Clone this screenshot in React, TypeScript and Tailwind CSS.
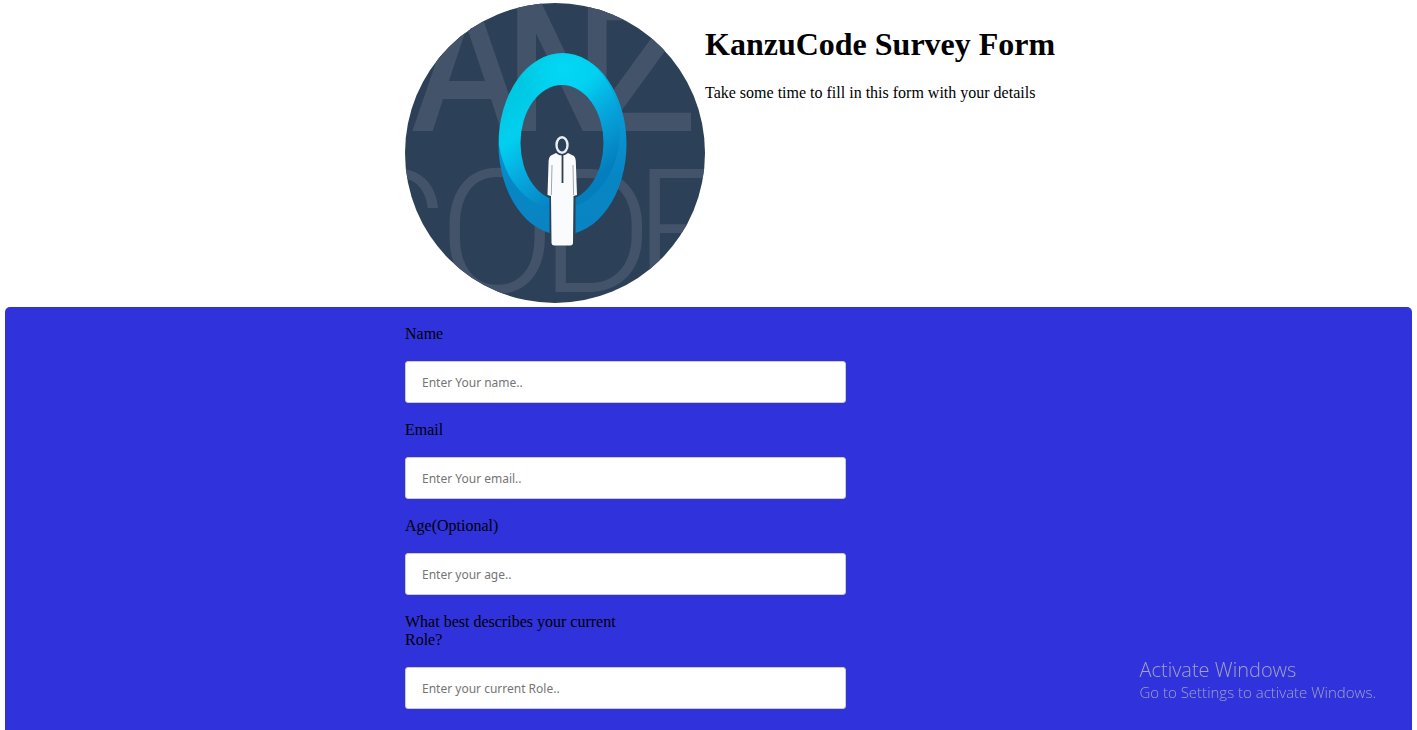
import React from "react";

type Field = {
  id: string;
  label: string;
  placeholder: string;
  type: string;
};

const fields: Field[] = [
  { id: "name", label: "Name", placeholder: "Enter Your name..", type: "text" },
  { id: "email", label: "Email", placeholder: "Enter Your email..", type: "email" },
  { id: "age", label: "Age(Optional)", placeholder: "Enter your age..", type: "text" },
  {
    id: "role",
    label: "What best describes your current Role?",
    placeholder: "Enter your current Role..",
    type: "text",
  },
];

function Logo() {
  return (
    <svg
      viewBox="0 0 300 300"
      role="img"
      aria-label="KanzuCode logo"
      className="size-[300px] shrink-0 rounded-full bg-[#2c4057]"
    >
      <defs>
        <linearGradient id="rim" gradientUnits="userSpaceOnUse" x1="150" y1="50" x2="170" y2="232">
          <stop offset="0" stopColor="#00c4e4" />
          <stop offset="0.35" stopColor="#0a9bd6" />
          <stop offset="0.7" stopColor="#0786c4" />
          <stop offset="1" stopColor="#0a84c2" />
        </linearGradient>
        <linearGradient id="face" gradientUnits="userSpaceOnUse" x1="120" y1="80" x2="194" y2="172">
          <stop offset="0" stopColor="#00c8e2" />
          <stop offset="0.3" stopColor="#02cff0" />
          <stop offset="0.62" stopColor="#06a6dc" />
          <stop offset="1" stopColor="#047fbe" />
        </linearGradient>
        <radialGradient id="glow" gradientUnits="userSpaceOnUse" cx="158" cy="66" r="44">
          <stop offset="0" stopColor="#02d8f6" />
          <stop offset="1" stopColor="#02d8f6" stopOpacity="0" />
        </radialGradient>
        <mask id="ring">
          <ellipse cx="157.5" cy="141" rx="64" ry="91" fill="#fff" />
          <ellipse cx="157" cy="140" rx="41.5" ry="58" fill="#000" />
          <rect x="144.500" y="185" width="26" height="60" fill="#000" />
        </mask>
      </defs>

      <g fill="#43536a">
        <g
          fontSize="172"
          stroke="#43536a"
          strokeWidth="4"
          className="font-['DejaVu_Sans_Condensed',sans-serif]"
        >
          <text x="9" y="126">A</text>
          <text x="99" y="126">N</text>
          <text x="185" y="126">Z</text>
        </g>
        <g fontSize="172" fontWeight="300" className="font-['Roboto',sans-serif]">
          <text x="-69" y="289">C</text>
          <text x="34" y="289">O</text>
          <text x="135" y="289">D</text>
          <text x="229" y="289">E</text>
        </g>
      </g>

      <g mask="url(#ring)">
        <rect x="90" y="45" width="135" height="195" fill="url(#rim)" />
        <ellipse cx="154" cy="127" rx="61" ry="79" fill="url(#face)" />
        <ellipse cx="154" cy="127" rx="61" ry="79" fill="url(#glow)" />
      </g>

      <ellipse cx="157" cy="142" rx="5.500" ry="7.800" fill="#2c4057" stroke="#e9eef2" strokeWidth="2.400" />
      <path
        d="M151 150 L147 152 Q144 153 143.600 158 L142.500 192 L146 193 L146.500 240 Q146.500 242 149 242.500 L165 242.500 Q168 242 168 240 L168.500 193 L172 192 L170.800 158 Q170.500 153 167 152 L163 150 Q157 155 151 150Z"
        fill="#fafbfc"
      />
      <path d="M157.500 152 V180" stroke="#2c4057" strokeWidth="1.800" />
      <path d="M147 162 L146.300 192 M168 162 L168.600 192" stroke="#8491a0" strokeWidth="0.800" />
    </svg>
  );
}

export default function App() {
  return (
    <div className="flex min-h-screen flex-col bg-white px-[5px] pt-[3px] font-['Liberation_Serif',serif] text-base leading-[18px] text-black">
      <header className="flex pb-1 pl-[400px]">
        <Logo />
        <div className="pt-[22px]">
          <h1 className="text-[32px] leading-[38px] font-bold">KanzuCode Survey Form</h1>
          <p className="pt-[21px]">Take some time to fill in this form with your details</p>
        </div>
      </header>

      <form className="flex flex-1 flex-col gap-[18px] rounded-t-[5px] bg-[#3032dc] pt-[18px] pl-[400px]">
        {fields.map((field) => (
          <div key={field.id} className="flex flex-col gap-[18px]">
            <label htmlFor={field.id} className="w-60">
              {field.label}
            </label>
            <input
              id={field.id}
              name={field.id}
              type={field.type}
              placeholder={field.placeholder}
              className="h-[42px] w-full max-w-[441px] rounded-[3px] border border-[#ccc] bg-white px-4 font-['Noto_Sans',sans-serif] text-xs text-black placeholder:text-[#757575]"
            />
          </div>
        ))}
      </form>

      <aside className="pointer-events-none fixed right-[41px] bottom-7 font-['Open_Sans',sans-serif] font-light text-[#a0a2c0]">
        <p className="text-xl leading-6">Activate Windows</p>
        <p className="text-[15px] leading-5">Go to Settings to activate Windows.</p>
      </aside>
    </div>
  );
}
